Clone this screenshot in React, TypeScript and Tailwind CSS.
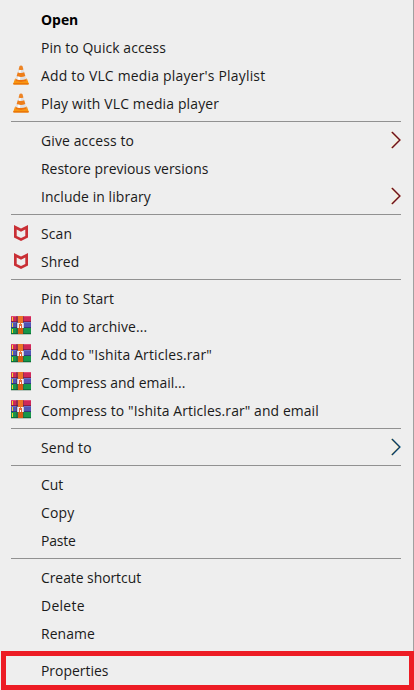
import React from 'react';

type IconKind = 'vlc' | 'mcafee' | 'rar';
interface Item {
  label: string;
  tracking?: string;
  icon?: IconKind;
  arrow?: 'red' | 'blue';
  bold?: boolean;
}

const groups: Item[][] = [
  [
    { label: 'Open', bold: true },
    { label: 'Pin to Quick access', tracking: 'tracking-[0.07px]' },
    { label: "Add to VLC media player's Playlist", icon: 'vlc', tracking: 'tracking-[0.22px]' },
    { label: 'Play with VLC media player', icon: 'vlc', tracking: 'tracking-[0.17px]' },
  ],
  [
    { label: 'Give access to', arrow: 'red', tracking: 'tracking-[0.15px]' },
    { label: 'Restore previous versions' },
    { label: 'Include in library', arrow: 'red', tracking: 'tracking-[0.08px]' },
  ],
  [
    { label: 'Scan', icon: 'mcafee', tracking: 'tracking-[0.15px]' },
    { label: 'Shred', icon: 'mcafee' },
  ],
  [
    { label: 'Pin to Start', tracking: 'tracking-[0.1px]' },
    { label: 'Add to archive...', icon: 'rar', tracking: 'tracking-[0.12px]' },
    { label: 'Add to "Ishita Articles.rar"', icon: 'rar', tracking: 'tracking-[0.16px]' },
    { label: 'Compress and email...', icon: 'rar', tracking: 'tracking-[0.03px]' },
    { label: 'Compress to "Ishita Articles.rar" and email', icon: 'rar', tracking: 'tracking-[0.1px]' },
  ],
  [{ label: 'Send to', arrow: 'blue', tracking: 'tracking-[0.2px]' }],
  [{ label: 'Cut' }, { label: 'Copy', tracking: 'tracking-[0.2px]' }, { label: 'Paste', tracking: 'tracking-[-0.2px]' }],
  [
    { label: 'Create shortcut', tracking: 'tracking-[-0.05px]' },
    { label: 'Delete', tracking: 'tracking-[0.3px]' },
    { label: 'Rename', tracking: 'tracking-[0.1px]' },
  ],
];

function VlcIcon() {
  return (
    <svg width="20" height="20" viewBox="0 0 20 20">
      <path d="M4.6 13.6h10.8q.6 0 .8.6l1.5 4.2q.3 1.1-.8 1.1H3.1q-1.1 0-.8-1.1l1.5-4.2q.2-.6.8-.6z" fill="#f9970f" />
      <path d="M2.2 18.2h15.6q.3 1.3-.8 1.3H3q-1.1 0-.8-1.3z" fill="#e56d08" />
      <path d="M8.6.9q1.4-.9 2.8 0l4.3 14.3q-5.7 3-11.4 0z" fill="#dfe0e2" />
      <path d="M8.6.9q1.4-.9 2.8 0l1 3.7q-2.4 1-4.8 0z" fill="#ee8424" />
      <path d="M6.8 7.3q3.2 1.3 6.4 0l1.1 3.6q-4.3 2-8.6 0z" fill="#ee7d18" />
      <path d="M4.7 14q5.3 2.2 10.6 0l.5 1.4q-5.8 3-11.6 0z" fill="#f07408" />
      <path d="M8.7 5 7.5 7.6l2 .3.3-2.8zM7 11.6l-.6 3 2.6.5.3-3.2z" fill="#fff" opacity=".9" />
    </svg>
  );
}

function McAfeeIcon() {
  return (
    <svg width="20" height="20" viewBox="0 0 20 20">
      <path
        d="M3 2.1 10 5.6l7-3.5v12.4L10 18.1l-7-3.6zM5.7 6.6v6.3l4.3 2.2 4.3-2.2V6.6L10 8.8z"
        fill="#c92f35"
        fillRule="evenodd"
      />
    </svg>
  );
}

function RarIcon() {
  return (
    <svg width="20" height="20" viewBox="0 0 20 20" shapeRendering="crispEdges">
      <path d="M0 0h20v6H0z" fill="#cf2859" />
      <path d="M0 0h20v1H0z" fill="#e04b74" />
      <path d="M0 5h20v1H0z" fill="#8d1c45" />
      <path d="M0 6h20v6H0z" fill="#5255b5" />
      <path d="M0 6h20v1H0z" fill="#6a6fc4" />
      <path d="M0 11h20v1H0z" fill="#34387c" />
      <path d="M0 12h20v6H0z" fill="#17974a" />
      <path d="M0 17h20v1H0z" fill="#0b7137" />
      <path d="M0 18h20v1H0z" fill="#b6c5bc" />
      <path d="M5 0h2v18H5zM12 0h1v18h-1z" fill="#3c3440" opacity=".4" />
      <path d="M7 0h5v18H7z" fill="#ed7426" />
      <path d="M7 12h5v6H7z" fill="#d65a13" />
      <path d="M1 1h1v4H1zM1 7h1v4H1zM1 13h1v4H1z" fill="#f5d52c" />
      <path d="M6 7h1v5H6zM12 7h1v5h-1z" fill="#c9c9dc" />
      <path d="M7 7h5v5H7z" fill="#f4efee" />
      <path d="M9 7h1v3H9z" fill="#e87934" />
      <path d="M8 8h1v4H8zM10 8h1v4h-1z" fill="#e0603c" />
      <path d="M9 10h1v2H9z" fill="#fff" />
    </svg>
  );
}

function Chevron({ color }: { color: 'red' | 'blue' }) {
  const edge = color === 'red' ? '#b65a58' : '#3fa6d8';
  const core = color === 'red' ? '#650b20' : '#0b3560';
  return (
    <svg className="mr-3 mb-0.5 shrink-0" width="10" height="18" viewBox="0 0 10 18" fill="none">
      <path d="M.3 1 8.3 9 .3 17" stroke="#fff0b8" strokeWidth="2" />
      <path d="M1.4 1l8 8-8 8" stroke={edge} strokeWidth="1" />
      <path d="M.8 1l8 8-8 8" stroke={core} strokeWidth="1.2" />
    </svg>
  );
}

function Row({ item }: { item: Item }) {
  return (
    <div className="flex h-7 items-center">
      <div className="mb-0.5 ml-[11px] flex h-5 w-[30px] shrink-0">
        {item.icon === 'vlc' && <VlcIcon />}
        {item.icon === 'mcafee' && <McAfeeIcon />}
        {item.icon === 'rar' && <RarIcon />}
      </div>
      <span
        className={`origin-left scale-x-[0.96] whitespace-nowrap ${item.bold ? 'font-bold text-black' : 'text-[#1a1a1a]'} ${item.tracking ?? ''}`}
      >
        {item.label}
      </span>
      <div className="grow" />
      {item.arrow && <Chevron color={item.arrow} />}
    </div>
  );
}

export default function App() {
  return (
    <div className="flex h-[690px] w-[414px] flex-col overflow-hidden bg-[#eee] font-['Open_Sans','Noto_Sans',sans-serif] text-[14.5px] leading-7">
      <div className="h-[651px] border-r border-[#a0a0a0] pt-1.5">
        {groups.map((group, i) => (
          <React.Fragment key={i}>
            {i > 0 && (
              <div className="flex h-[9px] pt-[3px]">
                <div className="ml-[11px] h-px w-[390px] bg-[#919191]" />
              </div>
            )}
            {group.map((item) => (
              <Row key={item.label} item={item} />
            ))}
          </React.Fragment>
        ))}
      </div>
      <div className="ml-px h-[39px] border-[5px] border-[#ed1c24]">
        <div className="-ml-1.5 pt-px">
          <Row item={{ label: 'Properties' }} />
        </div>
      </div>
    </div>
  );
}
